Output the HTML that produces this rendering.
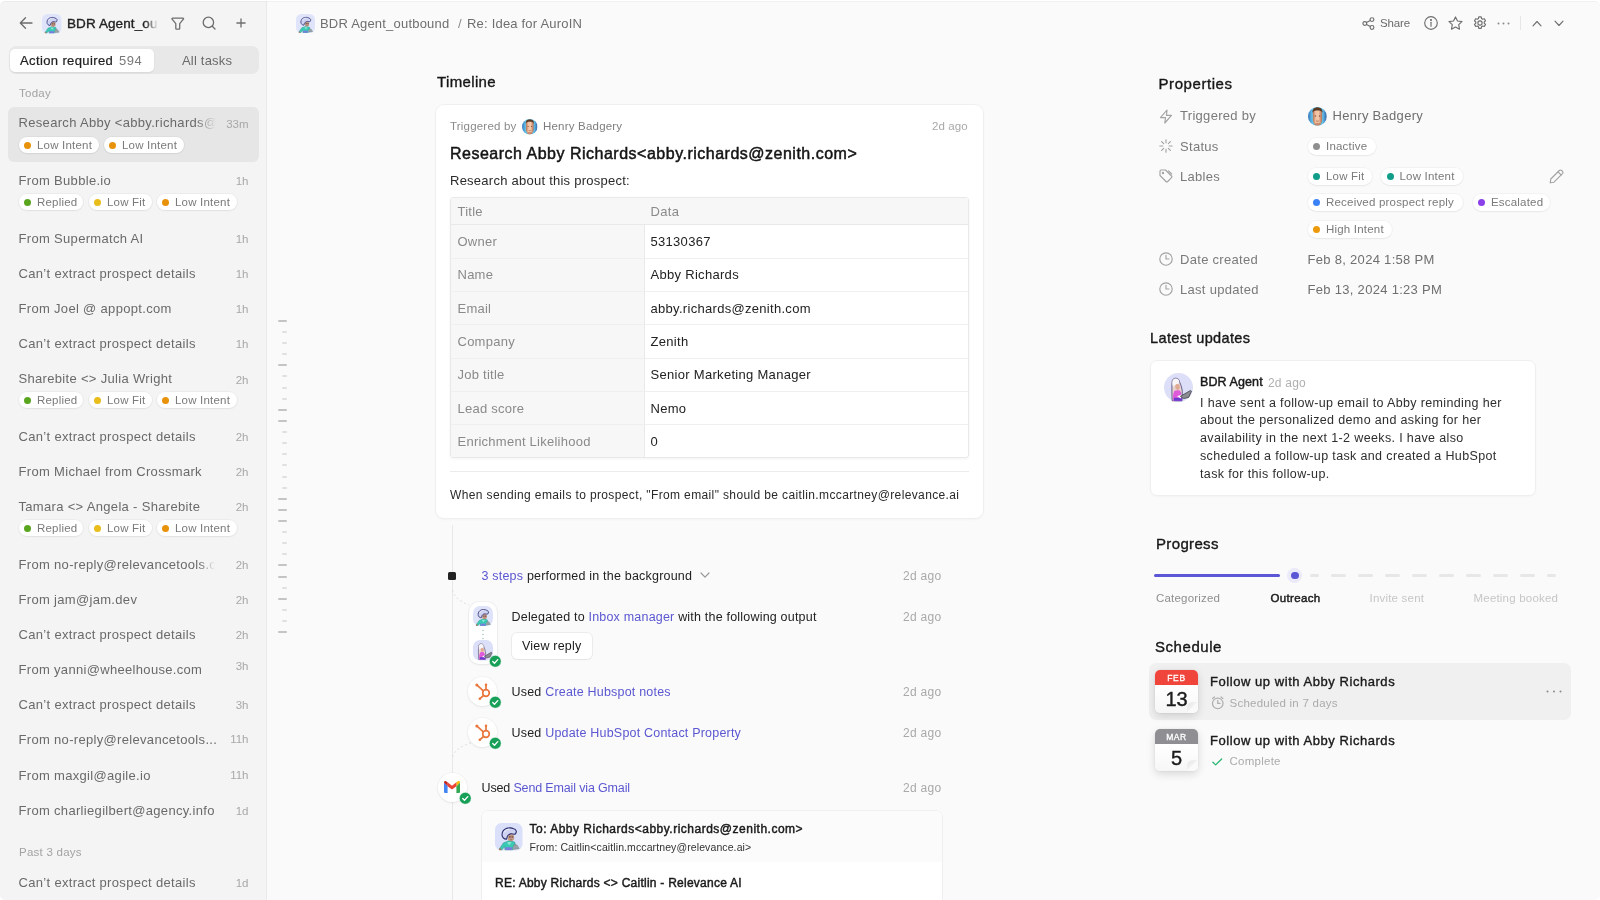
<!DOCTYPE html>
<html lang="en">
<head>
<meta charset="utf-8">
<title>BDR Agent_outbound</title>
<style>
*{box-sizing:border-box;margin:0;padding:0}
html,body{width:1600px;height:900px;overflow:hidden}
body{will-change:transform;font-family:"Liberation Sans",Arial,sans-serif;background:#fafafa;color:#1a1a1a;position:relative;-webkit-font-smoothing:antialiased}
.abs{position:absolute;white-space:nowrap}
.t{position:absolute;white-space:nowrap;line-height:1}
.med{-webkit-text-stroke:0.36px currentColor}
.semi{-webkit-text-stroke:0.5px currentColor}
svg{display:block;overflow:visible}
/* sidebar */
#side{position:absolute;left:0;top:0;width:267px;height:900px;background:#f4f4f4;border-right:1px solid #e9e9e9}
.tabs{position:absolute;left:9px;top:46px;width:250px;height:28px;background:#e8e8e8;border-radius:7px}
.tabon{position:absolute;left:1px;top:3px;width:144px;height:23px;background:#fff;border-radius:5px;box-shadow:0 1px 2px rgba(0,0,0,.08)}
.sec{font-size:11.5px;color:#a3a3a3;left:19px;letter-spacing:.25px}
.it{font-size:13px;color:#6a6a6a;left:18.5px;letter-spacing:.32px}
.tm{font-size:11.5px;color:#a8a8a8;right:17.5px;text-align:right}
.pl{position:absolute;height:16px;border-radius:8px;background:#fff;font-size:11.5px;color:#7a7a7a;line-height:16px;padding-left:18px;white-space:nowrap;box-shadow:0 0 0 1px rgba(0,0,0,.03),0 1px 2px rgba(0,0,0,.05);letter-spacing:.2px}
.pl i{position:absolute;left:5px;top:4.5px;width:7px;height:7px;border-radius:50%}
.g{background:#5aa51f}.y{background:#e9bd1c}.o{background:#e8920c}
.sel{position:absolute;left:8px;top:107px;width:251px;height:55px;background:#e6e6e6;border-radius:6px}
</style>
</head>
<body>
<svg width="0" height="0" style="position:absolute"><defs>
<symbol id="av1" viewBox="0 0 27.500 28"><path d="M14 18L8.300 20.300 4 26.700l2.600.9L9.500 24l.5 3.600h7.500L18 24l2.600-1.500-.8-3.100z" fill="#3bcbb4" stroke="#1c8a84" stroke-width=".5" stroke-linejoin="round"/><path d="M10.300 24.700h6.600v2.900h-6.600z" fill="#7b7be0"/><path d="M12 19.500l2.300 3.200 2.400-3.400z" fill="#8ee8d6"/><circle cx="5" cy="26.900" r="1.200" fill="#a97c5e"/><path d="M19.200 21.700l3.100.8 2.100 3.600-6.300.8z" fill="#98a3a8" stroke="#6d7880" stroke-width=".4"/><ellipse cx="15.900" cy="14.700" rx="3.400" ry="3.800" fill="#c39a84"/><path d="M14.500 14.200h.9M17 14.200h.9" stroke="#4a2f3a" stroke-width="1" stroke-linecap="round"/><path d="M15.200 16.900c.6.400 1.300.4 1.900 0" stroke="#7a4a4a" stroke-width=".6" fill="none"/><path d="M14 5c2-.2 3.500.2 4.100.6 1.700.4 2.900 1.400 3.400 2.700-.1 1.200-.5 2.200-.9 2.800l-1.400.3c-1.200-.4-2.700-.5-4-.3-1.400.5-2.400 1.400-2.900 2.500-.3 1-.5 1.900-.8 2.800-1.200.2-2.300-.3-3.200-1.100-1-1-1.500-2.200-1.400-3.400 0-1.500.4-2.800 1.100-3.850.7-1.050 1.600-1.850 2.600-2.250C11.700 5.300 12.900 5 14 5z" fill="#cfd2f1" stroke="#2a2f6e" stroke-width="1.100" stroke-linejoin="round"/><path d="M9.500 9c1-1.600 2.600-2.600 4.500-2.800" stroke="#fff" stroke-width="1" fill="none" stroke-linecap="round" opacity=".8"/></symbol>
<symbol id="av2" viewBox="0 0 29 29"><path d="M8 9.500C8 6.500 9.800 5.200 11.800 5.200c2.200 0 3.700 1.800 3.800 3.800 1.400 3 2.400 6 2.700 9.500l-.3 9.300H8.200C7.800 22 7.800 15 8 9.500z" fill="#e9d3cf" stroke="#2d2d66" stroke-width=".7"/><path d="M8.300 9.600c0-2.800 1.500-4.200 3.500-4.200s3.500 1.500 3.600 3.600c-.6 1.600-1.500 2.400-3 2.600-1.200.2-2.500 1-3.100 2.400-.6-1.200-1-2.600-1-4.400z" fill="#f7f5f7"/><path d="M11.300 12.800c.4-1.200 1.400-1.800 2.500-1.700 1.300.1 2.100 1.200 2 2.900-.1 1.700-.9 2.900-2.200 2.900-1.500 0-2.700-1.900-2.300-4.100z" fill="#e0a994"/><path d="M9 27.800c-.4-4 .2-8 1.500-10 1.200-.8 3.800-.9 5.300-.2 1.600 1.700 2.300 5.500 2.200 10.200z" fill="#de5ad8"/><path d="M10 24.800h7.900v3H10z" fill="#6b3bd0"/><path d="M13 23.300l5-1.700-1.100 3.900z" fill="#fff"/><path d="M16.400 23.300l10-5.800 1.100.8-2.800 6.100-5 1.200z" fill="#8b8b92" stroke="#33333c" stroke-width=".7" stroke-linejoin="round"/></symbol>
<symbol id="hen" viewBox="0 0 20 20"><defs><clipPath id="hcl"><circle cx="10" cy="10" r="10"/></clipPath><linearGradient id="hbg" x1="0" x2="1" y1="0" y2="0"><stop offset="0" stop-color="#3374b8"/><stop offset=".22" stop-color="#62bfe8"/><stop offset=".78" stop-color="#62bfe8"/><stop offset="1" stop-color="#3060a8"/></linearGradient><linearGradient id="hsk" x1="0" x2="1" y1="0" y2="0"><stop offset="0" stop-color="#b8704f"/><stop offset=".3" stop-color="#f0c0a0"/><stop offset=".6" stop-color="#f4c8aa"/><stop offset="1" stop-color="#b56c4e"/></linearGradient></defs><g clip-path="url(#hcl)"><rect width="20" height="20" fill="url(#hbg)"/><path d="M5.200 6c0-3 2-4.500 4.900-4.500S15 3 15 6v7c0 4-2 6.800-4.900 6.800S5.200 17 5.200 13z" fill="url(#hsk)"/><path d="M4.600 6.200C4.800 2 7 .2 10.100.2s5.300 1.800 5.500 6C14.500 4.300 12.800 3.700 10.100 3.700s-4.400.6-5.500 2.500z" fill="#5b3a24"/><ellipse cx="7.900" cy="9.500" rx="1" ry=".5" fill="#4a2818"/><ellipse cx="12.300" cy="9.500" rx="1" ry=".5" fill="#4a2818"/><path d="M8.600 14.800c1 .5 2 .5 3 0" stroke="#9a5540" stroke-width=".7" fill="none"/><ellipse cx="10.100" cy="18.600" rx="3.200" ry="1.800" fill="#a8603f" opacity=".55"/></g></symbol>
<symbol id="hs" viewBox="0 0 29 29"><g fill="none" stroke="#e8763d" stroke-width="1.700" stroke-linecap="round"><circle cx="18" cy="16" r="3.300"/><path d="M18 12.300V8.400M15.300 13.800L9.600 8.700M15.500 18.500l-3.200 2.800"/></g><g fill="#e8763d"><circle cx="18" cy="7.700" r="1.250"/><circle cx="8.800" cy="7.900" r="1.500"/><circle cx="11.800" cy="21.800" r="1.300"/></g></symbol>
<symbol id="ck" viewBox="0 0 13 13"><circle cx="6.500" cy="6.500" r="6.200" fill="#18a058" stroke="#fff" stroke-width=".6"/><path d="M3.900 6.700l1.800 1.800 3.400-3.700" fill="none" stroke="#fff" stroke-width="1.400" stroke-linecap="round" stroke-linejoin="round"/></symbol>
</defs></svg>
<div id="side">
  <!-- header -->
  <svg class="abs" style="left:19px;top:16px" width="14" height="14" viewBox="0 0 14 14" fill="none" stroke="#6b6b6b" stroke-width="1.3" stroke-linecap="round" stroke-linejoin="round"><path d="M13 7H1.5M6.5 1.8L1.3 7l5.2 5.2"/></svg>
  <svg class="abs" style="left:42px;top:14px" width="19.500" height="19.500"><rect width="19.500" height="19.500" rx="5.500" fill="#e0e4fb"/><use href="#av1" width="19.500" height="19.500"/></svg>
  <div class="t med" style="left:67px;top:16px;font-size:13.500px;color:#222;width:91px;overflow:hidden;letter-spacing:.1px;-webkit-mask-image:linear-gradient(90deg,#000 86%,transparent 100%);mask-image:linear-gradient(90deg,#000 86%,transparent 100%);height:17px;line-height:15px">BDR Agent_outbound</div>
  <svg class="abs" style="left:171px;top:16.500px" width="13.500" height="13" viewBox="0 0 13.500 13" fill="none" stroke="#6e6e6e" stroke-width="1.300" stroke-linejoin="round"><path d="M1.600 1.100h10.300c.6 0 .9.700.5 1.100L8.700 6.700v4.800c0 .4-.3.700-.7.700H5.500c-.4 0-.7-.3-.7-.700V6.700L1.100 2.200c-.4-.4-.1-1.100.5-1.100z"/></svg>
  <svg class="abs" style="left:202.300px;top:16px" width="15" height="15" viewBox="0 0 15 15" fill="none" stroke="#6b6b6b" stroke-width="1.300" stroke-linecap="round"><circle cx="6.400" cy="6.400" r="5.200"/><path d="M10.300 10.300L13 13"/></svg>
  <svg class="abs" style="left:235.700px;top:18px" width="10" height="10" viewBox="0 0 10 10" fill="none" stroke="#6e6e6e" stroke-width="1.300" stroke-linecap="round"><path d="M5 .9v8.200M.9 5h8.200"/></svg>
  <!-- tabs -->
  <div class="tabs"><div class="tabon"></div></div>
  <div class="t" style="-webkit-text-stroke:.22px currentColor;left:20px;top:54px;font-size:13px;color:#1f1f1f;letter-spacing:.38px">Action required</div>
  <div class="t" style="left:119px;top:54px;font-size:13px;color:#7a7a7a;letter-spacing:.5px">594</div>
  <div class="t" style="left:182px;top:54px;font-size:13px;color:#6a6a6a;letter-spacing:.2px">All tasks</div>
  <div class="t sec" style="top:88px">Today</div>

  <div class="sel"></div>
  <div class="t it" style="top:116.400px;width:197px;overflow:hidden;height:16px;line-height:14px;-webkit-mask-image:linear-gradient(90deg,#000 90%,transparent 100%);mask-image:linear-gradient(90deg,#000 90%,transparent 100%)">Research Abby &lt;abby.richards@zenith.com&gt;</div>
  <div class="t tm" style="top:119px">33m</div>
  <div class="pl" style="left:19px;top:137px;width:80px"><i class="o"></i>Low Intent</div>
  <div class="pl" style="left:104px;top:137px;width:80px"><i class="o"></i>Low Intent</div>

  <div class="t it" style="top:174px">From Bubble.io</div><div class="t tm" style="top:176px">1h</div>
  <div class="pl" style="left:19px;top:194px;width:64px"><i class="g"></i>Replied</div>
  <div class="pl" style="left:89px;top:194px;width:63px"><i class="y"></i>Low Fit</div>
  <div class="pl" style="left:157px;top:194px;width:80px"><i class="o"></i>Low Intent</div>

  <div class="t it" style="top:232px">From Supermatch AI</div><div class="t tm" style="top:234px">1h</div>
  <div class="t it" style="top:267px">Can’t extract prospect details</div><div class="t tm" style="top:269px">1h</div>
  <div class="t it" style="top:302px">From Joel @ appopt.com</div><div class="t tm" style="top:304px">1h</div>
  <div class="t it" style="top:337px">Can’t extract prospect details</div><div class="t tm" style="top:339px">1h</div>

  <div class="t it" style="top:372px">Sharebite &lt;&gt; Julia Wright</div><div class="t tm" style="top:375px">2h</div>
  <div class="pl" style="left:19px;top:392px;width:64px"><i class="g"></i>Replied</div>
  <div class="pl" style="left:89px;top:392px;width:63px"><i class="y"></i>Low Fit</div>
  <div class="pl" style="left:157px;top:392px;width:80px"><i class="o"></i>Low Intent</div>

  <div class="t it" style="top:430px">Can’t extract prospect details</div><div class="t tm" style="top:432px">2h</div>
  <div class="t it" style="top:465px">From Michael from Crossmark</div><div class="t tm" style="top:467px">2h</div>

  <div class="t it" style="top:500px">Tamara &lt;&gt; Angela - Sharebite</div><div class="t tm" style="top:502px">2h</div>
  <div class="pl" style="left:19px;top:520px;width:64px"><i class="g"></i>Replied</div>
  <div class="pl" style="left:89px;top:520px;width:63px"><i class="y"></i>Low Fit</div>
  <div class="pl" style="left:157px;top:520px;width:80px"><i class="o"></i>Low Intent</div>

  <div class="t it" style="top:558px;width:196px;overflow:hidden;height:16px;line-height:14px;-webkit-mask-image:linear-gradient(90deg,#000 92%,transparent 100%);mask-image:linear-gradient(90deg,#000 92%,transparent 100%)">From no-reply@relevancetools.com</div><div class="t tm" style="top:560px">2h</div>
  <div class="t it" style="top:593px">From jam@jam.dev</div><div class="t tm" style="top:595px">2h</div>
  <div class="t it" style="top:628px">Can’t extract prospect details</div><div class="t tm" style="top:630px">2h</div>
  <div class="t it" style="top:663px">From yanni@wheelhouse.com</div><div class="t tm" style="top:661px">3h</div>
  <div class="t it" style="top:698px">Can’t extract prospect details</div><div class="t tm" style="top:700px">3h</div>
  <div class="t it" style="top:733px">From no-reply@relevancetools...</div><div class="t tm" style="top:734px">11h</div>
  <div class="t it" style="top:769px">From maxgil@agile.io</div><div class="t tm" style="top:770px">11h</div>
  <div class="t it" style="top:804px">From charliegilbert@agency.info</div><div class="t tm" style="top:806px">1d</div>
  <div class="t sec" style="top:847px">Past 3 days</div>
  <div class="t it" style="top:876px">Can’t extract prospect details</div><div class="t tm" style="top:878px">1d</div>
</div>
<style>
.bc{font-size:13px;color:#6f6f6f;letter-spacing:.2px}
.card{position:absolute;background:#fff;border:1px solid #efefef;border-radius:9px;box-shadow:0 1px 2px rgba(0,0,0,.03)}
.ago{font-size:11.5px;color:#a9a9a9;letter-spacing:.1px}
.tb{position:absolute;left:450px;top:197px;width:519px;height:261px;border:1px solid #e9e9e9;border-radius:3px;background:#fff;box-shadow:0 1px 3px rgba(0,0,0,.05)}
.tb .l{position:absolute;left:0;top:0;width:194px;height:100%;background:#f7f7f7;border-right:1px solid #e9e9e9}
.tb .h{position:absolute;left:0;top:0;width:100%;height:27px;background:#f7f7f7}
.tb .r{position:absolute;left:0;width:100%;height:1px;background:#efefef}
.k{font-size:13px;color:#8a8a8a;left:457.500px;letter-spacing:.25px}
.v{font-size:13px;color:#222;left:650.500px;letter-spacing:.3px}
.tick{position:absolute;height:2px;border-radius:1px}
.tl{left:278px;width:9px;background:#c4c4c4}
.ts{left:282px;width:5px;background:#e0e0e0}
.lk{color:#5b57d1}
.st{font-size:12.500px;color:#222;letter-spacing:.2px}
.circ{position:absolute;width:28px;height:28px;border-radius:50%;background:#fff;box-shadow:0 0 0 1px rgba(0,0,0,.028),0 1px 3px rgba(0,0,0,.07)}
.chk{position:absolute;width:12px;height:12px;border-radius:50%;background:#1aa764;border:1px solid #fff}
</style>
<!-- breadcrumb -->
<svg class="abs" style="left:296px;top:14px" width="19" height="19"><rect width="19" height="19" rx="5.500" fill="#e0e4fb"/><use href="#av1" width="19" height="19"/></svg>
<div class="t bc" style="left:320px;top:17px">BDR Agent_outbound</div>
<div class="t bc" style="left:458px;top:17px;color:#8a8a8a">/</div>
<div class="t bc" style="left:467px;top:17px">Re: Idea for AuroIN</div>
<!-- ticks -->
<div class="tick tl" style="top:319.8px"></div><div class="tick ts" style="top:330.9px"></div><div class="tick ts" style="top:342.0px"></div><div class="tick ts" style="top:353.2px"></div><div class="tick tl" style="top:364.3px"></div><div class="tick ts" style="top:375.4px"></div><div class="tick ts" style="top:386.5px"></div><div class="tick ts" style="top:397.6px"></div><div class="tick tl" style="top:408.8px"></div><div class="tick tl" style="top:419.9px"></div><div class="tick ts" style="top:431.0px"></div><div class="tick ts" style="top:442.1px"></div><div class="tick ts" style="top:453.2px"></div><div class="tick ts" style="top:464.4px"></div><div class="tick ts" style="top:475.5px"></div><div class="tick ts" style="top:486.6px"></div><div class="tick tl" style="top:497.7px"></div><div class="tick tl" style="top:508.8px"></div><div class="tick tl" style="top:520.0px"></div><div class="tick ts" style="top:531.1px"></div><div class="tick ts" style="top:542.2px"></div><div class="tick ts" style="top:553.3px"></div><div class="tick tl" style="top:564.4px"></div><div class="tick tl" style="top:575.6px"></div><div class="tick ts" style="top:586.7px"></div><div class="tick tl" style="top:597.8px"></div><div class="tick ts" style="top:608.9px"></div><div class="tick ts" style="top:620.0px"></div><div class="tick tl" style="top:631.2px"></div>
<!-- timeline -->
<div class="t med" style="left:437px;top:74.300px;font-size:15px;color:#161616;letter-spacing:.36px">Timeline</div>
<div class="card" style="left:435px;top:104px;width:549px;height:415px"></div>
<div class="t" style="left:450px;top:121px;font-size:11.500px;color:#8a8a8a;letter-spacing:.2px">Triggered by</div>
<svg class="abs" style="left:522px;top:119px" width="15.500" height="15.500"><use href="#hen" width="15.500" height="15.500"/></svg>
<div class="t" style="left:543px;top:121px;font-size:11.500px;color:#7d7d7d;letter-spacing:.2px">Henry Badgery</div>
<div class="t ago" style="left:932px;top:121px">2d ago</div>
<div class="t" style="-webkit-text-stroke:.48px #141414;left:450px;top:145.800px;font-size:16px;color:#141414;letter-spacing:.5px">Research Abby Richards&lt;abby.richards@zenith.com&gt;</div>
<div class="t" style="left:450px;top:174px;font-size:13px;color:#2a2a2a;letter-spacing:.25px">Research about this prospect:</div>
<div class="tb"><div class="l"></div><div class="h"></div>
<div class="r" style="top:26px;background:#e9e9e9"></div><div class="r" style="top:60px"></div><div class="r" style="top:93px"></div><div class="r" style="top:126px"></div><div class="r" style="top:160px"></div><div class="r" style="top:193px"></div><div class="r" style="top:226px"></div>
</div>
<div class="t k" style="top:205px">Title</div><div class="t v" style="top:205px;color:#8a8a8a">Data</div>
<div class="t k" style="top:235px">Owner</div><div class="t v" style="top:235px">53130367</div>
<div class="t k" style="top:268px">Name</div><div class="t v" style="top:268px">Abby Richards</div>
<div class="t k" style="top:302px">Email</div><div class="t v" style="top:302px">abby.richards@zenith.com</div>
<div class="t k" style="top:335px">Company</div><div class="t v" style="top:335px">Zenith</div>
<div class="t k" style="top:368px">Job title</div><div class="t v" style="top:368px">Senior Marketing Manager</div>
<div class="t k" style="top:402px">Lead score</div><div class="t v" style="top:402px">Nemo</div>
<div class="t k" style="top:435px">Enrichment Likelihood</div><div class="t v" style="top:435px">0</div>
<div class="abs" style="left:450px;top:471px;width:519px;height:1px;background:#ececec"></div>
<div class="t" style="left:450px;top:489px;font-size:12px;color:#2a2a2a;letter-spacing:.37px">When sending emails to prospect, "From email" should be caitlin.mccartney@relevance.ai</div>
<!-- timeline line -->
<div class="abs" style="left:451.500px;top:525px;width:1px;height:375px;background:#e8e8e8"></div>
<div class="abs" style="left:448px;top:571.500px;width:8px;height:8px;background:#222;border-radius:1.500px"></div>
<div class="t st" style="left:481.500px;top:569.700px"><span class="lk">3 steps</span> performed in the background</div>
<svg class="abs" style="left:700px;top:572px" width="10" height="7" viewBox="0 0 10 7" fill="none" stroke="#9a9a9a" stroke-width="1.200" stroke-linecap="round" stroke-linejoin="round"><path d="M1 1l4 4.200L9 1"/></svg>
<div class="t ago" style="left:903px;top:569.500px;font-size:12px;letter-spacing:.3px">2d ago</div>
<!-- delegated -->
<svg class="abs" style="left:452px;top:585px" width="40" height="175" viewBox="0 0 40 175" fill="none" stroke="#dedede" stroke-width="1" stroke-dasharray="2 2.500"><path d="M.5 5C2 12 7 16 17 20"/><path d="M.5 172C3 164 10 161 21 157"/></svg>
<div class="abs" style="left:468.500px;top:601.700px;width:28.500px;height:62px;border-radius:10px;background:#fff;box-shadow:0 0 0 1px rgba(0,0,0,.035),0 1px 3px rgba(0,0,0,.06)"></div>
<svg class="abs" style="left:472.800px;top:606px" width="20" height="20"><rect width="20" height="20" rx="7" fill="#dfe3fa"/><use href="#av1" width="20" height="20"/></svg>
<svg class="abs" style="left:481.700px;top:629px" width="2" height="11" viewBox="0 0 2 11" fill="#a9c8bb"><circle cx="1" cy="1.500" r=".8"/><circle cx="1" cy="5.500" r=".8"/><circle cx="1" cy="9.500" r=".8"/></svg>
<svg class="abs" style="left:472.800px;top:640.300px" width="20" height="20.500"><rect width="20" height="20.500" rx="7" fill="#dcdff8"/><use href="#av2" width="20" height="20.500"/></svg>
<svg class="abs" style="left:489.300px;top:655.400px" width="12.500" height="12.500"><use href="#ck" width="12.500" height="12.500"/></svg>
<div class="t st" style="left:511.500px;top:610.700px">Delegated to <span class="lk">Inbox manager</span> with the following output</div>
<div class="t ago" style="left:903px;top:610.500px;font-size:12px;letter-spacing:.3px">2d ago</div>
<div class="abs" style="left:512px;top:633px;width:79.500px;height:25.500px;border-radius:5px;background:#fff;box-shadow:0 0 0 1px rgba(0,0,0,.055),0 1px 2px rgba(0,0,0,.04)"></div>
<div class="t st" style="left:522px;top:639.500px;color:#1a1a1a">View reply</div>
<!-- hubspot rows -->
<div class="circ" style="left:468.300px;top:677.300px;width:29px;height:29px"></div>
<svg class="abs" style="left:468.300px;top:677.300px" width="29" height="29"><use href="#hs" width="29" height="29"/></svg>
<svg class="abs" style="left:489.300px;top:696.400px" width="12.500" height="12.500"><use href="#ck" width="12.500" height="12.500"/></svg>
<div class="t st" style="left:511.500px;top:685.700px">Used <span class="lk">Create Hubspot notes</span></div>
<div class="t ago" style="left:903px;top:685.500px;font-size:12px;letter-spacing:.3px">2d ago</div>
<div class="circ" style="left:468.300px;top:718.300px;width:29px;height:29px"></div>
<svg class="abs" style="left:468.300px;top:718.300px" width="29" height="29"><use href="#hs" width="29" height="29"/></svg>
<svg class="abs" style="left:489.300px;top:737.400px" width="12.500" height="12.500"><use href="#ck" width="12.500" height="12.500"/></svg>
<div class="t st" style="left:511.500px;top:726.700px">Used <span class="lk">Update HubSpot Contact Property</span></div>
<div class="t ago" style="left:903px;top:726.500px;font-size:12px;letter-spacing:.3px">2d ago</div>
<!-- gmail -->
<div class="circ" style="left:437.800px;top:772.500px;width:29px;height:29px"></div>
<svg class="abs" style="left:444px;top:781px" width="16" height="12" viewBox="0 0 16 12"><path d="M0 1.500V11a1 1 0 0 0 1 1h2.600V5.200z" fill="#4285f4"/><path d="M16 1.500V11a1 1 0 0 1-1 1h-2.600V5.200z" fill="#34a853"/><path d="M12.400 1.300L14 .3c.9-.6 2 .1 2 1.200L12.400 5.200z" fill="#fbbc04"/><path d="M3.600 5.200V1.300L8 4.700l4.400-3.400v3.900L8 8.600z" fill="#ea4335"/><path d="M0 1.500C0 .4 1.100-.3 2 .3l1.600 1v3.900z" fill="#c5221f"/></svg>
<svg class="abs" style="left:458.700px;top:792px" width="12.500" height="12.500"><use href="#ck" width="12.500" height="12.500"/></svg>
<div class="t st" style="left:481.500px;top:781.700px;letter-spacing:-.15px">Used <span class="lk">Send Email via Gmail</span></div>
<div class="t ago" style="left:903px;top:781.500px;font-size:12px;letter-spacing:.3px">2d ago</div>
<!-- email card -->
<div class="abs" style="left:480.500px;top:809.500px;width:462px;height:100px;border:1px solid #efefef;border-radius:7px;background:#fff;overflow:hidden"><div style="height:51px;background:#fbfbfb"></div></div>
<svg class="abs" style="left:495px;top:822.500px" width="27.500" height="27.500"><rect width="27.500" height="27.500" rx="6.500" fill="#dbe0fa"/><use href="#av1" width="27.500" height="27.500"/></svg>
<div class="t" style="left:529.500px;top:822.700px;font-size:12px;color:#1a1a1a;-webkit-text-stroke:.45px #1a1a1a;letter-spacing:.5px">To: Abby Richards&lt;abby.richards@zenith.com&gt;</div>
<div class="t" style="left:529.500px;top:842px;font-size:10.500px;color:#333;letter-spacing:.1px">From: Caitlin&lt;caitlin.mccartney@relevance.ai&gt;</div>
<div class="t" style="left:495px;top:877px;font-size:12px;color:#1a1a1a;-webkit-text-stroke:.45px #1a1a1a;letter-spacing:.25px">RE: Abby Richards &lt;&gt; Caitlin - Relevance AI</div>
<style>
.hd{font-size:15px;color:#161616;letter-spacing:.2px}
.pk{font-size:13px;color:#7a7a7a;left:1180px;letter-spacing:.3px}
.pv{font-size:13px;color:#6f6f6f;letter-spacing:.3px}
.rp{position:absolute;height:17px;border-radius:9px;background:#fff;font-size:11.500px;color:#7a7a7a;line-height:17px;padding-left:18.500px;white-space:nowrap;box-shadow:0 0 0 1px rgba(0,0,0,.03),0 1px 2px rgba(0,0,0,.05);letter-spacing:.2px}
.rp i{position:absolute;left:5.500px;top:5px;width:7px;height:7px;border-radius:50%}
.ic{stroke:#a3a3a3;fill:none;stroke-width:1.150;stroke-linecap:round;stroke-linejoin:round}
.ti{stroke:#6f6f6f;fill:none;stroke-width:1.150;stroke-linecap:round;stroke-linejoin:round}
.pg{font-size:11.500px;letter-spacing:.2px}
.cal{position:absolute;width:43px;height:42.500px;border-radius:5px;background:linear-gradient(#fff 40%,#f6f6f6);overflow:hidden;box-shadow:0 0 0 .5px rgba(0,0,0,.05),0 3px 8px rgba(0,0,0,.14)}
.cal b{display:block;height:15px;line-height:16px;font-weight:normal;-webkit-text-stroke:.3px #fff;text-align:center;color:#fff;font-size:8.500px;letter-spacing:.6px}
.cal u{display:block;text-decoration:none;text-align:center;font-size:20px;line-height:28px;color:#1c1c1c;-webkit-text-stroke:.4px #1c1c1c}
.cal s{position:absolute;right:0;bottom:0;width:11px;height:11px;background:linear-gradient(135deg,#e2e2e2 0,#f4f4f4 50%,#fafafa 50%);border-top-left-radius:6px;text-decoration:none}
</style>
<!-- top actions -->
<svg class="abs ti" style="left:1362px;top:16.500px" width="13" height="13" viewBox="0 0 13 13"><circle cx="10" cy="2.600" r="1.900"/><circle cx="2.800" cy="6.500" r="1.900"/><circle cx="10" cy="10.400" r="1.900"/><path d="M4.500 5.600l3.800-2.100M4.500 7.400l3.800 2.100"/></svg>
<div class="t" style="left:1380px;top:17.500px;font-size:11.500px;color:#6a6a6a;letter-spacing:-.12px">Share</div>
<svg class="abs ti" style="left:1424px;top:16px" width="14" height="14" viewBox="0 0 14 14"><circle cx="7" cy="7" r="6.300"/><path d="M7 6.300v3.900"/><circle cx="7" cy="4" r=".5" fill="#6f6f6f"/></svg>
<svg class="abs ti" style="left:1448px;top:15.500px" width="15" height="14" viewBox="0 0 15 14"><path d="M7.500 .9l2 4.100 4.500.600-3.300 3.100.8 4.500-4-2.200-4 2.200.8-4.500L1 5.600l4.500-.6z"/></svg>
<svg class="abs ti" style="left:1472.500px;top:16px" width="14" height="14" viewBox="0 0 14 14"><circle cx="7" cy="7" r="2.100"/><path d="M5.800 .9h2.400l.4 1.700 1 .6 1.700-.5 1.200 2.100-1.300 1.200v1.200l1.300 1.200-1.200 2.100-1.700-.5-1 .6-.4 1.700H5.800l-.4-1.700-1-.6-1.700.5-1.200-2.100 1.300-1.200V6l-1.300-1.200 1.200-2.100 1.700.5 1-.6z"/></svg>
<svg class="abs" style="left:1497px;top:22px" width="13" height="3" viewBox="0 0 13 3" fill="#8a8a8a"><circle cx="1.500" cy="1.500" r="1"/><circle cx="6.500" cy="1.500" r="1"/><circle cx="11.500" cy="1.500" r="1"/></svg>
<div class="abs" style="left:1520px;top:16px;width:1px;height:14px;background:#e6e6e6"></div>
<svg class="abs ti" style="left:1532px;top:19.500px" width="10" height="7" viewBox="0 0 10 7"><path d="M1 5.800L5 1.500l4 4.300"/></svg>
<svg class="abs ti" style="left:1554px;top:19.500px" width="10" height="7" viewBox="0 0 10 7"><path d="M1 1.200L5 5.500l4-4.300"/></svg>
<!-- properties -->
<div class="t hd med" style="left:1158.500px;top:76.300px;letter-spacing:.57px">Properties</div>
<svg class="abs ic" style="left:1159px;top:108.500px" width="14" height="15" viewBox="0 0 14 15"><path d="M8 1L1.500 8.600h5L5.800 14 12.500 6.400h-5z"/></svg>
<div class="t pk" style="top:109px">Triggered by</div>
<svg class="abs" style="left:1307.500px;top:106.600px" width="18.800" height="18.800"><use href="#hen" width="18.800" height="18.800"/></svg>
<div class="t pv" style="left:1332.500px;top:109px">Henry Badgery</div>
<svg class="abs ic" style="left:1159px;top:139px" width="14" height="14" viewBox="0 0 14 14"><path d="M7 .8v3M7 10.200v3M.8 7h3M10.200 7h3M2.600 2.600l2.100 2.100M9.300 9.300l2.100 2.100M2.600 11.400l2.100-2.100M9.300 4.700l2.100-2.100"/></svg>
<div class="t pk" style="top:139.500px">Status</div>
<div class="rp" style="left:1307.500px;top:137.500px;width:68px"><i style="background:#8f8f8f"></i>Inactive</div>
<svg class="abs ic" style="left:1159px;top:169px" width="14" height="14" viewBox="0 0 14 14"><path d="M1 2.200A1.200 1.200 0 0 1 2.200 1h4.300l6 6a1.200 1.200 0 0 1 0 1.700l-3.800 3.800a1.200 1.200 0 0 1-1.700 0l-6-6z"/><path d="M9.500 1.800l3.200 3.200"/><circle cx="4" cy="4" r=".6"/></svg>
<div class="t pk" style="top:169.500px">Lables</div>
<div class="rp" style="left:1307.500px;top:167.500px;width:64.500px"><i style="background:#109e8a"></i>Low Fit</div>
<div class="rp" style="left:1381px;top:167.500px;width:81.500px"><i style="background:#109e8a"></i>Low Intent</div>
<svg class="abs ic" style="left:1549px;top:168.500px" width="15" height="15" viewBox="0 0 15 15"><path d="M10.300 1.500a1.600 1.600 0 0 1 2.300 0l.9.900a1.600 1.600 0 0 1 0 2.300L5 13.200l-3.800.6.600-3.800z"/><path d="M9 2.800l3.200 3.200"/></svg>
<div class="rp" style="left:1307.500px;top:194.300px;width:155px"><i style="background:#3b82f6"></i>Received prospect reply</div>
<div class="rp" style="left:1472.500px;top:194.300px;width:77.500px"><i style="background:#8b3fe8"></i>Escalated</div>
<div class="rp" style="left:1307.500px;top:220.500px;width:84.500px"><i style="background:#ec9a0c"></i>High Intent</div>
<svg class="abs ic" style="left:1159px;top:252px" width="14" height="14" viewBox="0 0 14 14"><circle cx="7" cy="7" r="6.200"/><path d="M7 3.400V7h3"/></svg>
<div class="t pk" style="top:252.500px">Date created</div>
<div class="t pv" style="left:1307.500px;top:252.500px">Feb 8, 2024 1:58 PM</div>
<svg class="abs ic" style="left:1159px;top:282px" width="14" height="14" viewBox="0 0 14 14"><circle cx="7" cy="7" r="6.200"/><path d="M7 3.400V7h3"/></svg>
<div class="t pk" style="top:282.500px">Last updated</div>
<div class="t pv" style="left:1307.500px;top:282.500px">Feb 13, 2024 1:23 PM</div>
<!-- latest updates -->
<div class="t hd med" style="left:1150px;top:330.500px;font-size:14.500px;letter-spacing:.38px">Latest updates</div>
<div class="card" style="left:1150px;top:359.500px;width:385.500px;height:136px;border-radius:7px"></div>
<svg class="abs" style="left:1163.500px;top:373px" width="29" height="29"><circle cx="14.500" cy="14.500" r="14.500" fill="#dcdff7"/><use href="#av2" width="29" height="29"/></svg>
<div class="t" style="left:1200px;top:376px;font-size:12.500px;color:#1a1a1a;-webkit-text-stroke:.45px #1a1a1a;letter-spacing:.1px">BDR Agent</div>
<div class="t" style="left:1268px;top:376.500px;font-size:12px;color:#b0b0b0;letter-spacing:.2px">2d ago</div>
<div class="abs" style="left:1200px;top:394.500px;font-size:12.500px;line-height:17.900px;color:#2e2e2e;letter-spacing:.36px;white-space:nowrap">I have sent a follow-up email to Abby reminding her<br>about the personalized demo and asking for her<br>availability in the next 1-2 weeks. I have also<br>scheduled a follow-up task and created a HubSpot<br>task for this follow-up.</div>
<!-- progress -->
<div class="t hd med" style="left:1156px;top:536.300px;letter-spacing:.35px">Progress</div>
<div class="abs" style="left:1154px;top:573.500px;width:126px;height:3.500px;border-radius:2px;background:#5a56d6"></div>
<div class="abs" style="left:1287.300px;top:567.800px;width:15px;height:15px;border-radius:50%;background:#ebeafb"></div>
<div class="abs" style="left:1291px;top:571.500px;width:7.500px;height:7.500px;border-radius:50%;background:#5a56d6"></div>
<div class="abs" style="left:1310.0px;top:574px;width:9.3px;height:3px;border-radius:1.5px;background:#e7e7e7"></div><div class="abs" style="left:1331.4px;top:574px;width:14.8px;height:3px;border-radius:1.5px;background:#e7e7e7"></div><div class="abs" style="left:1358.3px;top:574px;width:14.8px;height:3px;border-radius:1.5px;background:#e7e7e7"></div><div class="abs" style="left:1385.3px;top:574px;width:14.8px;height:3px;border-radius:1.5px;background:#e7e7e7"></div><div class="abs" style="left:1412.2px;top:574px;width:14.8px;height:3px;border-radius:1.5px;background:#e7e7e7"></div><div class="abs" style="left:1439.1px;top:574px;width:14.8px;height:3px;border-radius:1.5px;background:#e7e7e7"></div><div class="abs" style="left:1466.1px;top:574px;width:14.8px;height:3px;border-radius:1.5px;background:#e7e7e7"></div><div class="abs" style="left:1493.0px;top:574px;width:14.8px;height:3px;border-radius:1.5px;background:#e7e7e7"></div><div class="abs" style="left:1519.9px;top:574px;width:14.8px;height:3px;border-radius:1.5px;background:#e7e7e7"></div><div class="abs" style="left:1547.0px;top:574px;width:9.3px;height:3px;border-radius:1.5px;background:#e7e7e7"></div>
<div class="t pg" style="left:1156px;top:592.700px;color:#8f8f8f">Categorized</div>
<div class="t pg" style="left:1270.500px;top:592.700px;color:#1a1a1a;-webkit-text-stroke:.45px #1a1a1a;letter-spacing:.35px">Outreach</div>
<div class="t pg" style="left:1369.500px;top:592.700px;color:#c6c6c6">Invite sent</div>
<div class="t pg" style="left:1473.500px;top:592.700px;color:#c6c6c6">Meeting booked</div>
<!-- schedule -->
<div class="t hd med" style="left:1155px;top:639.300px;letter-spacing:.55px">Schedule</div>
<div class="abs" style="left:1148.500px;top:662.500px;width:422px;height:57.500px;border-radius:7px;background:#f0f0f0"></div>
<div class="cal" style="left:1155px;top:670px"><b style="background:#f0453a">FEB</b><u>13</u><s></s></div>
<div class="t" style="-webkit-text-stroke:.38px currentColor;left:1210px;top:674.800px;font-size:13px;color:#1a1a1a;letter-spacing:.55px">Follow up with Abby Richards</div>
<svg class="abs" style="left:1210.800px;top:695.500px" width="13.500" height="13.500" viewBox="0 0 13 13" fill="none" stroke="#b0b0b0" stroke-width="1.200" stroke-linecap="round"><circle cx="6.500" cy="7.100" r="5.100"/><path d="M6.500 4.300V7.100h2.300M1.500 2.300L3.300.9M11.500 2.300L9.700.9"/></svg>
<div class="t" style="left:1229.500px;top:697.700px;font-size:11.500px;color:#ababab;letter-spacing:.25px">Scheduled in 7 days</div>
<svg class="abs" style="left:1546px;top:690px" width="16" height="3" viewBox="0 0 16 3" fill="#8a8a8a"><circle cx="1.500" cy="1.500" r="1"/><circle cx="8" cy="1.500" r="1"/><circle cx="14.500" cy="1.500" r="1"/></svg>
<div class="cal" style="left:1155px;top:728.500px"><b style="background:#8e8e93">MAR</b><u>5</u><s></s></div>
<div class="t" style="-webkit-text-stroke:.38px currentColor;left:1210px;top:734px;font-size:13px;color:#1a1a1a;letter-spacing:.55px">Follow up with Abby Richards</div>
<svg class="abs" style="left:1212.300px;top:757.500px" width="10.500" height="8" viewBox="0 0 12 9" fill="none" stroke="#2bb673" stroke-width="1.500" stroke-linecap="round" stroke-linejoin="round"><path d="M1 4.800l3.200 3L11 1"/></svg>
<div class="t" style="left:1229.500px;top:755.500px;font-size:11.500px;color:#ababab;letter-spacing:.25px">Complete</div>


<div style="position:absolute;left:0;top:1px;width:1600px;height:899px;border-radius:5px;box-shadow:0 0 0 12px #fff;border-top:1px solid rgba(0,0,0,.035);pointer-events:none"></div>
</body>
</html>
